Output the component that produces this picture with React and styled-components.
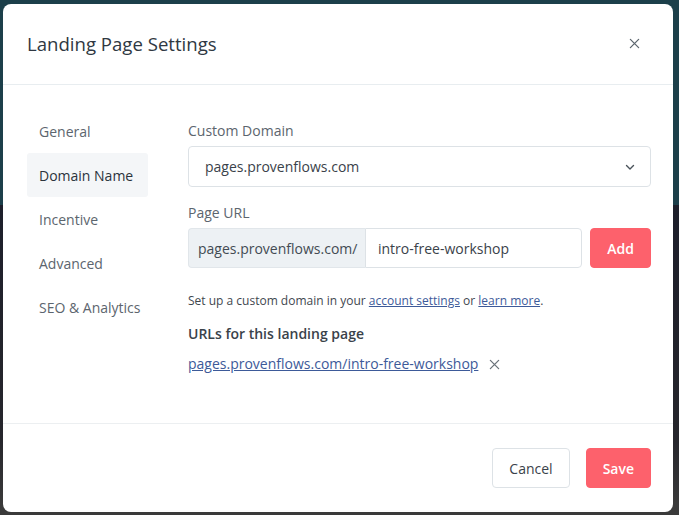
import React from 'react'
import styled, { createGlobalStyle } from 'styled-components'

const Global = createGlobalStyle`
  html, body { margin: 0; padding: 0; }
  body {
    font-family: "Open Sans", "Noto Sans", sans-serif;
    background: linear-gradient(to bottom, #1c3f4a 0, #1c3f4a 205px, #1d1f2b 205px, #26262c 440px, #3a3a3a 505px);
    min-height: 515px;
  }
  * { box-sizing: border-box; }
`

const Backdrop = styled.div`
  width: 679px;
  height: 515px;
  padding: 4px 6px 3px 3px;
`
const Modal = styled.div`
  width: 670px;
  height: 508px;
  background: #fff;
  border-radius: 8px;
  display: flex;
  flex-direction: column;
  overflow: hidden;
`
const Header = styled.header`
  height: 81px;
  flex: none;
  display: flex;
  align-items: center;
  justify-content: space-between;
  padding: 0 32px 0 24px;
  border-bottom: 1px solid #e8edf0;
`
const Title = styled.h1`
  margin: 0;
  font-size: 18.6px;
  font-weight: 400;
  color: #2f3842;
  padding-bottom: 2px;
`
const CloseBtn = styled.button`
  border: none;
  background: none;
  padding: 0;
  width: 12px;
  height: 12px;
  display: flex;
  color: #5f6870;
  cursor: pointer;
`
const Body = styled.div`
  flex: 1;
  display: flex;
  padding: 24px 22px 0 24px;
  border-bottom: 1px solid #eceff1;
`
const Nav = styled.nav`
  width: 121px;
  flex: none;
  display: flex;
  flex-direction: column;
  margin-right: 40px;
`
const NavItem = styled.div`
  height: 44px;
  display: flex;
  align-items: center;
  padding-left: 12px;
  font-size: 14px;
  border-radius: 3px;
  white-space: nowrap;
  color: ${p => (p.$active ? '#2b333c' : '#5c656e')};
  background: ${p => (p.$active ? '#f4f6f8' : 'transparent')};
`
const Content = styled.div`
  flex: 1;
  display: flex;
  flex-direction: column;
`
const Label = styled.div`
  font-size: 14px;
  color: #5c656e;
  line-height: 20px;
  margin-top: ${p => p.$top || 0}px;
  margin-bottom: 5px;
`
const Select = styled.div`
  height: 41px;
  border: 1px solid #dde2e6;
  border-radius: 4px;
  display: flex;
  align-items: center;
  justify-content: space-between;
  padding: 0 14px 0 16px;
  font-size: 14px;
  color: #3a424a;
`
const Row = styled.div`
  display: flex;
  height: 40px;
  gap: 8px;
`
const Group = styled.div`
  flex: 1;
  display: flex;
`
const Prefix = styled.div`
  width: 177px;
  background: #edf1f4;
  border: 1px solid #e1e6ea;
  border-right: none;
  border-radius: 4px 0 0 4px;
  display: flex;
  align-items: center;
  padding-left: 9px;
  font-size: 14px;
  color: #434b53;
`
const Input = styled.div`
  flex: 1;
  border: 1px solid #dde2e6;
  border-radius: 0 4px 4px 0;
  display: flex;
  align-items: center;
  padding-left: 12px;
  font-size: 14px;
  color: #3a424a;
`
const Button = styled.button`
  font-family: inherit;
  font-size: 14px;
  height: 40px;
  border-radius: 4px;
  padding: 0 16px;
  cursor: pointer;
  border: 1px solid ${p => (p.$primary ? '#fd616c' : '#dde2e6')};
  background: ${p => (p.$primary ? '#fd616c' : '#fff')};
  color: ${p => (p.$primary ? '#fff' : '#3a424a')};
  font-weight: ${p => (p.$primary ? 600 : 400)};
`
const Help = styled.p`
  margin: 24px 0 0;
  font-size: 12px;
  line-height: 18px;
  color: #3f474f;
`
const Link = styled.a`
  color: #3d5a99;
  text-decoration: underline;
  cursor: pointer;
`
const SubTitle = styled.div`
  font-size: 14px;
  font-weight: 600;
  color: #3a424a;
  margin-top: 14px;
  line-height: 20px;
`
const UrlRow = styled.div`
  display: flex;
  align-items: center;
  gap: 11px;
  margin-top: 10px;
  font-size: 14px;
  line-height: 20px;
`
const RemoveBtn = styled.button`
  border: none;
  background: none;
  padding: 0;
  display: flex;
  color: #6a7279;
  cursor: pointer;
`
const Footer = styled.footer`
  height: 88px;
  flex: none;
  display: flex;
  align-items: center;
  justify-content: flex-end;
  gap: 16px;
  padding: 0 22px 0 0;
`

const X = ({ size }) => (
  <svg width={size} height={size} viewBox="0 0 12 12" fill="none" stroke="currentColor" strokeWidth="1.4" strokeLinecap="round">
    <path d="M1.5 1.5l9 9M10.5 1.5l-9 9" />
  </svg>
)

const nav = ['General', 'Domain Name', 'Incentive', 'Advanced', 'SEO & Analytics']

export default function App() {
  return (
    <>
      <Global />
      <Backdrop>
        <Modal>
          <Header>
            <Title>Landing Page Settings</Title>
            <CloseBtn><X size={11} /></CloseBtn>
          </Header>
          <Body>
            <Nav>
              {nav.map(n => (
                <NavItem key={n} $active={n === 'Domain Name'}>{n}</NavItem>
              ))}
            </Nav>
            <Content>
              <Label $top={12}>Custom Domain</Label>
              <Select>
                pages.provenflows.com
                <svg width="12" height="12" viewBox="0 0 12 12" fill="none" stroke="#4a525a" strokeWidth="1.4" strokeLinecap="round" strokeLinejoin="round">
                  <path d="M2.5 4.5L6 8l3.5-3.5" />
                </svg>
              </Select>
              <Label $top={16}>Page URL</Label>
              <Row>
                <Group>
                  <Prefix>pages.provenflows.com/</Prefix>
                  <Input>intro-free-workshop</Input>
                </Group>
                <Button $primary>Add</Button>
              </Row>
              <Help>
                Set up a custom domain in your <Link>account settings</Link> or <Link>learn more</Link>.
              </Help>
              <SubTitle>URLs for this landing page</SubTitle>
              <UrlRow>
                <Link>pages.provenflows.com/intro-free-workshop</Link>
                <RemoveBtn><X size={11} /></RemoveBtn>
              </UrlRow>
            </Content>
          </Body>
          <Footer>
            <Button>Cancel</Button>
            <Button $primary>Save</Button>
          </Footer>
        </Modal>
      </Backdrop>
    </>
  )
}
